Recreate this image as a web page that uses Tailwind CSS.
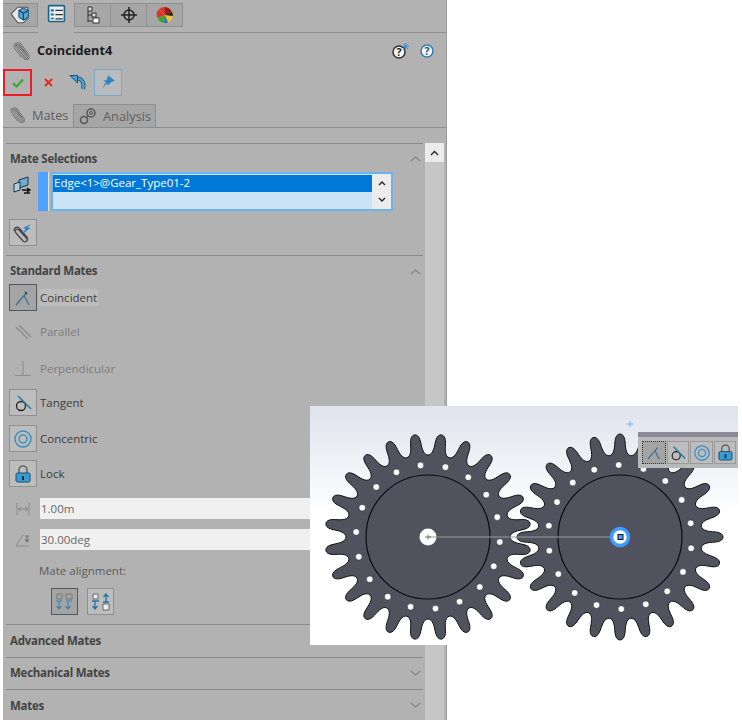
<!DOCTYPE html>
<html lang="en">
<head>
  <meta charset="UTF-8">
  <script src="https://cdn.jsdelivr.net/npm/@tailwindcss/browser@4"></script>
  <title>Coincident4</title>
</head>
<body class="bg-white font-['Open_Sans','Noto_Sans',sans-serif] text-[11.5px] text-[#3c3c3c]">
<div class="relative w-[742px] h-[720px] overflow-hidden bg-white">

  <!-- property manager panel -->
  <div class="ml-[3px] w-[444px] h-[720px] bg-[#b2b2b2] border-r border-[#9a9a9a]">

    <!-- top tabs -->
    <div class="flex items-start h-[33px] pt-[3px] border-b border-[#8c8c8c]">
      <div class="w-[35px] h-[24px] bg-[#a6a6a6] border border-l-0 border-[#8f8f8f] flex items-center justify-center">
        <svg width="20" height="20" viewBox="0 0 18 18"><path d="M1 8l6-6h9v10l-4 4H7z" fill="#e8e8e8" stroke="#555"/><path d="M8 5l4-2.500L16.500 5v6L12 13.500 8 11z" fill="#5aa6cf" stroke="#1f5f85"/><path d="M8 5l4 2.500L16.500 5M12 7.500v6" fill="none" stroke="#123f5c"/></svg>
      </div>
      <div class="w-[36px] h-[30px] bg-[#b2b2b2] flex items-start justify-center pt-[1px]">
        <svg width="19" height="19" viewBox="0 0 18 18"><rect x="1.500" y="1.500" width="15" height="15" rx="1" fill="#e8eef2" stroke="#1f5f85" stroke-width="1.500"/><path d="M3.500 5h3v2h-3zM3.500 9h3v2h-3zM3.500 13h3v1.500h-3z" fill="#1f77a8"/><path d="M8 6h7M8 10h7M8 14h7" stroke="#333" stroke-width="1.200"/></svg>
      </div>
      <div class="w-[37px] h-[24px] bg-[#a6a6a6] border border-[#8f8f8f] flex items-center justify-center">
        <svg width="16" height="18" viewBox="0 0 16 18"><path d="M3 1h4v4H3zM3 5v11M3 9h4M3 15h4" fill="#ddd" stroke="#333"/><rect x="7" y="7" width="4" height="4" fill="#ddd" stroke="#333"/><rect x="8" y="12" width="6" height="5" fill="#fff" stroke="#333"/></svg>
      </div>
      <div class="w-[36px] h-[24px] bg-[#a6a6a6] border border-l-0 border-[#8f8f8f] flex items-center justify-center">
        <svg width="18" height="18" viewBox="0 0 18 18"><circle cx="9" cy="9" r="5" fill="none" stroke="#222" stroke-width="1.500"/><path d="M9 1v16M1 9h16" stroke="#222" stroke-width="1.500"/></svg>
      </div>
      <div class="w-[36px] h-[24px] bg-[#a6a6a6] border border-l-0 border-[#8f8f8f] flex items-center justify-center">
        <svg width="18" height="18" viewBox="0 0 18 18"><circle cx="9" cy="9" r="8" fill="#f2c230"/><path d="M9 9L3 3a8 8 0 0 1 6-2z" fill="#d33"/><path d="M9 9V1a8 8 0 0 1 7 5z" fill="#8c1f2a"/><path d="M9 9l7-3a8 8 0 0 1 1 4z" fill="#222"/><path d="M9 9L1.500 12A8 8 0 0 1 3 3z" fill="#d8382f"/><path d="M9 9l-7.500 3A8 8 0 0 0 8 17z" fill="#3da535"/><path d="M9 9l-1 8a8 8 0 0 0 4 -.500z" fill="#2f6fc4"/></svg>
      </div>
    </div>

    <!-- title -->
    <div class="flex items-center h-[35px]">
      <svg class="ml-[10px]" width="18" height="20" viewBox="0 0 18 20"><path d="M15 16L6 5.500C4.500 3.500 2 5 3.500 7.500L11.500 17C13 18.800 16.500 18 15.500 14.500L8 4C5.500 .5 0 3 2 7L9 16" fill="none" stroke="#5a5a5a" stroke-width="2"/><path d="M15 16L6 5.500C4.500 3.500 2 5 3.500 7.500L11.500 17C13 18.800 16.500 18 15.500 14.500L8 4C5.500 .5 0 3 2 7L9 16" fill="none" stroke="#eee" stroke-width=".6"/></svg>
      <span class="ml-[6px] pt-[1px] font-bold text-[12.7px] text-[#1c1c1c]">Coincident4</span>
      <svg class="ml-auto" width="20" height="18" viewBox="0 0 20 18"><circle cx="8" cy="10" r="6" fill="#f4f4f4" stroke="#333" stroke-width="1.500"/><text x="8" y="13.800" text-anchor="middle" font-size="10.500" font-weight="700" fill="#222">?</text><path d="M14.500 1v7M11 4.500h7M12 2l5 5M17 2l-5 5" stroke="#3a9ad9"/></svg>
      <svg class="ml-[9px] mr-[12px]" width="14" height="14" viewBox="0 0 14 14"><circle cx="7" cy="7" r="6" fill="#f4f4f4" stroke="#2f7fb5" stroke-width="1.500"/><text x="7" y="10.800" text-anchor="middle" font-size="10.500" font-weight="700" fill="#1f4f70">?</text></svg>
    </div>

    <!-- ok / cancel row -->
    <div class="flex items-center h-[28px]">
      <div class="w-[29px] h-[27px] mt-[1px] border-2 border-[#ee1c25] flex items-center justify-center">
        <svg width="12" height="10" viewBox="0 0 12 10"><path d="M1 5l3.500 3.500L11 1.500" fill="none" stroke="#3fa82c" stroke-width="2.200"/></svg>
      </div>
      <div class="w-[32px] flex justify-center">
        <svg width="9" height="9" viewBox="0 0 9 9"><path d="M1 1l7 7M8 1L1 8" stroke="#e4291a" stroke-width="2"/></svg>
      </div>
      <div class="w-[28px] flex justify-center">
        <svg width="18" height="17" viewBox="0 0 18 17"><path d="M6 5C11 3 16 7 14 15" fill="none" stroke="#14506f" stroke-width="4"/><path d="M6 5C11 3 16 7 14 15" fill="none" stroke="#4aa3d3" stroke-width="2.500"/><path d="M1 1.500h7.500v7.500z" fill="#4aa3d3" stroke="#14506f"/></svg>
      </div>
      <div class="ml-[2px] w-[28px] h-[27px] border border-[#7aa7c7] bg-[#b9bcbf] flex items-center justify-center">
        <svg width="16" height="16" viewBox="0 0 14 14"><path d="M7 1l6 5-3 1-3 3-1-2-4 5 3-6-2-1 3-1z" fill="#2f87bd"/></svg>
      </div>
    </div>

    <!-- mates / analysis tabs -->
    <div class="flex items-end h-[24px] mt-[8px] border-b border-[#8c8c8c]">
      <div class="flex items-center w-[70px] h-[24px] pl-[7px]">
        <svg width="16" height="18" viewBox="0 0 18 20"><path d="M15 16L6 5.500C4.500 3.500 2 5 3.500 7.500L11.500 17C13 18.800 16.500 18 15.500 14.500L8 4C5.500 .5 0 3 2 7L9 16" fill="none" stroke="#5a5a5a" stroke-width="2"/><path d="M15 16L6 5.500C4.500 3.500 2 5 3.500 7.500L11.500 17C13 18.800 16.500 18 15.500 14.500L8 4C5.500 .5 0 3 2 7L9 16" fill="none" stroke="#eee" stroke-width=".6"/></svg>
        <span class="ml-[6px] pt-[2px] text-[12.8px] text-[#5f5f5f]">Mates</span>
      </div>
      <div class="flex items-center w-[83px] h-[23px] pl-[5px] bg-[#a6a6a6] border border-b-0 border-[#8f8f8f]">
        <svg width="18" height="18" viewBox="0 0 18 18"><circle cx="12" cy="6" r="4" fill="none" stroke="#555" stroke-width="1.500"/><circle cx="12" cy="6" r="1.500" fill="none" stroke="#555"/><circle cx="5" cy="13" r="3.500" fill="none" stroke="#555" stroke-width="1.500"/><path d="M8 9l1 1" stroke="#555" stroke-width="2"/></svg>
        <span class="ml-[6px] pt-[2px] text-[12.8px] text-[#5f5f5f]">Analysis</span>
      </div>
    </div>

    <!-- scrolling body -->
    <div class="flex mt-[15px]">
      <div class="w-[422px] pl-[3px] shrink-0">

        <!-- mate selections -->
        <div class="border-t border-[#8a8a8a] w-[417px]">
          <div class="flex items-center justify-between h-[28px] pl-[4px] pr-[2px] pt-[1px] font-bold tracking-[-0.25px] text-[#444]">
            <span>Mate Selections</span>
            <svg width="11" height="7" viewBox="0 0 11 7"><path d="M1 6l4.500-4L10 6" fill="none" stroke="#8b8b8b" stroke-width="1.500"/></svg>
          </div>
          <div class="flex h-[39px]">
            <div class="w-[32px] pl-[7px] pt-[3px]">
              <svg width="20" height="20" viewBox="0 0 20 20"><path d="M6 5l9-3v8l-9 3z" fill="#6aaed6" stroke="#234"/><path d="M1 9l6-2v8l-6 2z" fill="#b5cfe0" stroke="#234"/><path d="M9 15h8M14 13l3 2-3 2M17 18h-6" fill="none" stroke="#111" stroke-width="1.300"/></svg>
            </div>
            <div class="w-[11px] h-[39px] bg-[#4fa3ff] border-r border-[#dce6ee]"></div>
            <div class="ml-[2px] w-[342px] h-[39px] border-2 border-[#6bb3ee] bg-[#cce4f7] flex">
              <div class="flex-1">
                <div class="h-[17px] bg-[#0078d7] text-white leading-[16px] pl-[1px] mt-[1px]">Edge&lt;1&gt;@Gear_Type01-2</div>
              </div>
              <div class="w-[19px] bg-[#ececec] flex flex-col items-center justify-around">
                <svg width="8" height="6" viewBox="0 0 8 6"><path d="M1 5l3-3 3 3" fill="none" stroke="#222" stroke-width="1.300"/></svg>
                <svg width="8" height="6" viewBox="0 0 8 6"><path d="M1 1l3 3 3-3" fill="none" stroke="#222" stroke-width="1.300"/></svg>
              </div>
            </div>
          </div>
          <div class="mt-[8px] ml-[3px] w-[28px] h-[27px] border border-[#8f8f8f] bg-[#bdbdbd] flex items-center justify-center">
            <svg width="20" height="20" viewBox="0 0 20 20"><path d="M15 17L6 7C4 5 1 7 3 10l7 8c2 2 6 0 4-4L7 6C5 3 1 4 1 8" fill="none" stroke="#4a4a4a" stroke-width="1.300"/><path d="M18 1L10 5l2.500 1-3 5 8-6-3-.5z" fill="#2f87bd"/></svg>
          </div>
        </div>

        <!-- standard mates -->
        <div class="mt-[9px] border-t border-[#8a8a8a] w-[417px]">
          <div class="flex items-center justify-between h-[28px] pl-[4px] pr-[2px] pt-[2px] font-bold tracking-[-0.25px] text-[#444]">
            <span>Standard Mates</span>
            <svg width="11" height="7" viewBox="0 0 11 7"><path d="M1 6l4.500-4L10 6" fill="none" stroke="#8b8b8b" stroke-width="1.500"/></svg>
          </div>

          <div class="flex items-center h-[27px] ml-[3px]">
            <div class="w-[28px] h-[27px] border border-[#4d5a66] bg-[#a4a4a4] flex items-center justify-center">
              <svg width="18" height="18" viewBox="0 0 18 18"><path d="M2 16L13 3M10 6.500L15 16" fill="none" stroke="#3d6f8e" stroke-width="1.200"/><path d="M11 2.500l2 3" stroke="#222"/></svg>
            </div>
            <span class="ml-[2px] px-[1px] bg-[#bcbcbc]">Coincident</span>
          </div>
          <div class="flex items-center h-[27px] ml-[3px] mt-[7px] text-[#7d7d7d]">
            <div class="w-[28px] flex justify-center">
              <svg width="18" height="18" viewBox="0 0 18 18"><path d="M2 4l12 12M5 2l12 12" stroke="#8f8f8f" stroke-width="1.500"/></svg>
            </div>
            <span class="ml-[3px]">Parallel</span>
          </div>
          <div class="flex items-center h-[27px] ml-[3px] mt-[10px] text-[#7d7d7d]">
            <div class="w-[28px] flex justify-center">
              <svg width="18" height="18" viewBox="0 0 18 18"><path d="M1 15.500h16M9 1v14" stroke="#8f8f8f" stroke-width="1.200"/></svg>
            </div>
            <span class="ml-[3px]">Perpendicular</span>
          </div>
          <div class="flex items-center h-[27px] ml-[3px] mt-[7px]">
            <div class="w-[28px] h-[27px] border border-[#8f8f8f] bg-[#bdbdbd] flex items-center justify-center">
              <svg width="20" height="20" viewBox="0 0 20 20"><circle cx="8" cy="13" r="4.500" fill="none" stroke="#222" stroke-width="1.300"/><path d="M5 3l13 13" stroke="#2a78a8" stroke-width="1.600"/></svg>
            </div>
            <span class="ml-[3px]">Tangent</span>
          </div>
          <div class="flex items-center h-[27px] ml-[3px] mt-[9px]">
            <div class="w-[28px] h-[27px] border border-[#8f8f8f] bg-[#bdbdbd] flex items-center justify-center">
              <svg width="20" height="20" viewBox="0 0 20 20"><circle cx="10" cy="10" r="8" fill="none" stroke="#3b90c0" stroke-width="1.500"/><circle cx="10" cy="10" r="4" fill="none" stroke="#3b90c0" stroke-width="1.500"/></svg>
            </div>
            <span class="ml-[3px]">Concentric</span>
          </div>
          <div class="flex items-center h-[27px] ml-[3px] mt-[8px]">
            <div class="w-[28px] h-[27px] border border-[#8f8f8f] bg-[#bdbdbd] flex items-center justify-center">
              <svg width="16" height="18" viewBox="0 0 16 18"><path d="M4 8V5a4 4 0 0 1 8 0v3" fill="none" stroke="#666" stroke-width="1.600"/><rect x="1" y="8" width="14" height="9" rx="1.500" fill="#3a9bd0" stroke="#174f70"/><rect x="7" y="11" width="2" height="4" fill="#0d2f45"/></svg>
            </div>
            <span class="ml-[3px]">Lock</span>
          </div>

          <div class="flex items-center h-[21px] mt-[11px] ml-[3px]">
            <div class="w-[28px] flex justify-center">
              <svg width="16" height="14" viewBox="0 0 16 14"><path d="M2 1v12M14 1v12M3 7h10M3 7l3-2M3 7l3 2M13 7l-3-2M13 7l-3 2" fill="none" stroke="#8a8a8a"/></svg>
            </div>
            <div class="ml-[3px] w-[353px] h-[21px] bg-[#f0f0f0] pl-[1px] leading-[21px] text-[#666]">1.00m</div>
          </div>
          <div class="flex items-center h-[21px] mt-[10px] ml-[3px]">
            <div class="w-[28px] flex justify-center">
              <svg width="16" height="14" viewBox="0 0 16 14"><path d="M1 13h13M1 13L8 2" fill="none" stroke="#8a8a8a"/><path d="M10 3h4M12 3v5M10 6l2 3 2-3" fill="none" stroke="#777" stroke-width="1.200"/></svg>
            </div>
            <div class="ml-[3px] w-[353px] h-[21px] bg-[#f0f0f0] pl-[1px] leading-[21px] text-[#666]">30.00deg</div>
          </div>

          <div class="h-[20px] mt-[11px] ml-[33px] leading-[20px] text-[#5a5a5a]">Mate alignment:</div>
          <div class="flex mt-[7px] ml-[45px] gap-[9px]">
            <div class="w-[27px] h-[27px] border border-[#4d5a66] bg-[#a4a4a4] flex items-center justify-center">
              <svg width="20" height="20" viewBox="0 0 20 20"><path d="M2 2h5v5H2zM11 2h6v5h-6z" fill="none" stroke="#777"/><path d="M4 9v8M1.500 14l2.500 3 2.500-3M13 9v8M10.500 14l2.500 3 2.500-3M1 9h6M11 9h6" fill="none" stroke="#3f86ad" stroke-width="1.200"/></svg>
            </div>
            <div class="w-[27px] h-[27px] border border-[#8f8f8f] bg-[#bdbdbd] flex items-center justify-center">
              <svg width="20" height="20" viewBox="0 0 20 20"><path d="M2 2h5v5H2zM12 12h6v6h-6z" fill="#eee" stroke="#666"/><path d="M4 9v8M1.500 14l2.500 3 2.500-3M15 2v8M12.500 5l2.500-3 2.500 3M1 9h7M12 10h6" fill="none" stroke="#1f77a8" stroke-width="1.300"/></svg>
            </div>
          </div>
        </div>

        <!-- collapsed groups -->
        <div class="mt-[9px] border-t border-[#8a8a8a] w-[417px]">
          <div class="flex items-center justify-between h-[32px] pl-[4px] pr-[2px] font-bold tracking-[-0.25px] text-[#444]">
            <span>Advanced Mates</span>
            <svg width="11" height="7" viewBox="0 0 11 7"><path d="M1 1l4.500 4L10 1" fill="none" stroke="#8b8b8b" stroke-width="1.500"/></svg>
          </div>
        </div>
        <div class="border-t border-[#8a8a8a] w-[417px]">
          <div class="flex items-center justify-between h-[31px] pl-[4px] pr-[2px] pb-[1px] font-bold tracking-[-0.25px] text-[#444]">
            <span>Mechanical Mates</span>
            <svg width="11" height="7" viewBox="0 0 11 7"><path d="M1 1l4.500 4L10 1" fill="none" stroke="#8b8b8b" stroke-width="1.500"/></svg>
          </div>
        </div>
        <div class="border-t border-[#8a8a8a] w-[417px]">
          <div class="flex items-center justify-between h-[31px] pl-[4px] pr-[2px] font-bold tracking-[-0.25px] text-[#444]">
            <span>Mates</span>
            <svg width="11" height="7" viewBox="0 0 11 7"><path d="M1 1l4.500 4L10 1" fill="none" stroke="#8b8b8b" stroke-width="1.500"/></svg>
          </div>
        </div>
      </div>

      <!-- scrollbar -->
      <div class="w-[19px] h-[577px] bg-[#c6c6c6]">
        <div class="h-[19px] bg-[#ececec] flex items-center justify-center">
          <svg width="9" height="6" viewBox="0 0 9 6"><path d="M1 5l3.500-3.500L8 5" fill="none" stroke="#222" stroke-width="1.300"/></svg>
        </div>
      </div>
    </div>
  </div>

  <!-- graphics area floating over the panel -->
  <div class="absolute left-[310px] top-[406px] w-[428px] h-[239px] bg-linear-to-b from-[#dfe3ed] to-white to-[45%]">
    <svg class="absolute left-0 top-0" width="428" height="239" viewBox="310 406 428 239">
      <g fill="#50535e" stroke="#111" stroke-width="1">
        <path id="gearLeft"/>
        <path id="gearRight"/>
      </g>
      <g id="holes" fill="#fff" stroke="#111" stroke-width=".5"></g>
      <circle cx="428" cy="537" r="62" fill="none" stroke="#0c0c0c" stroke-width="1.200"/>
      <circle cx="620" cy="537" r="62" fill="none" stroke="#0c0c0c" stroke-width="1.200"/>
      <circle cx="428" cy="537" r="8.500" fill="#fff"/>
      <path d="M428 537H612" stroke="#9a9a9a" stroke-width="1.200"/>
      <path d="M425 537h6M428 534.500v5" stroke="#777"/>
      <circle cx="620" cy="537" r="8.500" fill="#fff" stroke="#3f9bff" stroke-width="3.500"/>
      <rect x="618" y="534.500" width="5" height="5" fill="#3fa0ff" stroke="#111"/>
      <path d="M630 421v6M627 424h6" stroke="#6bb3ff"/>
    </svg>

    <!-- mate pop-up toolbar -->
    <div class="absolute left-[328px] top-[26px] w-[100px] h-[36px] bg-[#b9b9b9] border-t-[5px] border-[#8a8a96]">
      <div class="flex gap-[1px] pt-[4px] pl-[4px]">
        <div class="w-[24px] h-[23px] border border-dotted border-[#333] bg-[#a4a4a4] flex items-center justify-center">
          <svg width="16" height="16" viewBox="0 0 18 18"><path d="M2 16L13 3M10 6.500L15 16" fill="none" stroke="#3d6f8e" stroke-width="1.300"/></svg>
        </div>
        <div class="w-[22px] h-[23px] border border-[#999] bg-[#bdbdbd] flex items-center justify-center">
          <svg width="18" height="18" viewBox="0 0 20 20"><circle cx="8" cy="13" r="4.500" fill="none" stroke="#222" stroke-width="1.300"/><path d="M5 3l13 13" stroke="#2a78a8" stroke-width="1.600"/></svg>
        </div>
        <div class="w-[23px] h-[23px] border border-[#999] bg-[#bdbdbd] flex items-center justify-center">
          <svg width="18" height="18" viewBox="0 0 20 20"><circle cx="10" cy="10" r="8" fill="none" stroke="#3b90c0" stroke-width="1.500"/><circle cx="10" cy="10" r="4" fill="none" stroke="#3b90c0" stroke-width="1.500"/></svg>
        </div>
        <div class="w-[22px] h-[23px] border border-[#999] bg-[#bdbdbd] flex items-center justify-center">
          <svg width="15" height="17" viewBox="0 0 16 18"><path d="M4 8V5a4 4 0 0 1 8 0v3" fill="none" stroke="#666" stroke-width="1.600"/><rect x="1" y="8" width="14" height="9" rx="1.500" fill="#3a9bd0" stroke="#174f70"/><rect x="7" y="11" width="2" height="4" fill="#0d2f45"/></svg>
        </div>
      </div>
    </div>
  </div>
</div>

<script>
  // 24 wavy teeth around the gear, phase in degrees from 12 o'clock
  function gearPath(cx, cy, phase) {
    var step = 15, d = '';
    for (var i = 0; i < 24 * 24; i++) {
      var t = i / 24;
      var frac = t - Math.round(t);
      var r = 82 + 21 * (0.5 + 0.5 * Math.cos(2 * Math.PI * frac));
      // steeper flanks and rounder ends, tooth a bit thinner than the gap
      var warp = 0.05 * Math.sin(4 * Math.PI * frac) - 0.03 * Math.sin(2 * Math.PI * frac);
      var a = (phase + (t + warp) * step) * Math.PI / 180;
      d += (i ? 'L' : 'M') + (cx + r * Math.sin(a)).toFixed(2) + ' ' + (cy - r * Math.cos(a)).toFixed(2);
    }
    return d + 'Z';
  }
  document.getElementById('gearLeft').setAttribute('d', gearPath(428, 537, 7.5));
  document.getElementById('gearRight').setAttribute('d', gearPath(620, 537, 0));

  var holes = document.getElementById('holes'), html = '';
  [[428, 14], [620, -1]].forEach(function (g) {
    for (var k = 0; k < 18; k++) {
      var a = (g[1] + k * 20) * Math.PI / 180;
      html += '<circle cx="' + (g[0] + 72 * Math.sin(a)) + '" cy="' + (537 - 72 * Math.cos(a)) + '" r="3.300"/>';
    }
  });
  holes.innerHTML = html;
</script>
</body>
</html>
